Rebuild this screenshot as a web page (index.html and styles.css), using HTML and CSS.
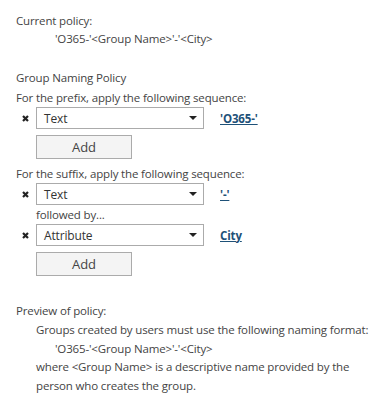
FILE: index.html
```html
<!DOCTYPE html>
<html lang="en">
<head>
    <meta charset="UTF-8">
    <title>Group Naming Policy</title>
    <link rel="stylesheet" href="styles.css">
</head>
<body>

<div class="page">
    <div class="section current">
        <div class="label">Current policy:</div>
        <div class="indent2">'O365-'&lt;Group Name&gt;'-'&lt;City&gt;</div>
    </div>

    <div class="section naming">
        <div class="label title">Group Naming Policy</div>
        <div class="label">For the prefix, apply the following sequence:</div>

        <div class="rule-row">
            <span class="remove"><svg width="7" height="7" viewBox="0 0 7 7"><path d="M1 1L6 6M6 1L1 6" stroke="#222" stroke-width="2.2"/></svg></span>
            <div class="select"><span>Text</span><span class="arrow"></span></div>
            <a class="value" href="#">'O365-'</a>
        </div>
        <button class="add-btn">Add</button>

        <div class="label suffix">For the suffix, apply the following sequence:</div>
        <div class="rule-row">
            <span class="remove"><svg width="7" height="7" viewBox="0 0 7 7"><path d="M1 1L6 6M6 1L1 6" stroke="#222" stroke-width="2.2"/></svg></span>
            <div class="select"><span>Text</span><span class="arrow"></span></div>
            <a class="value" href="#">'-'</a>
        </div>
        <div class="followed">followed by...</div>
        <div class="rule-row">
            <span class="remove"><svg width="7" height="7" viewBox="0 0 7 7"><path d="M1 1L6 6M6 1L1 6" stroke="#222" stroke-width="2.2"/></svg></span>
            <div class="select"><span>Attribute</span><span class="arrow"></span></div>
            <a class="value" href="#">City</a>
        </div>
        <button class="add-btn">Add</button>
    </div>

    <div class="section preview">
        <div class="label">Preview of policy:</div>
        <div class="indent1">Groups created by users must use the following naming format:</div>
        <div class="indent2">'O365-'&lt;Group Name&gt;'-'&lt;City&gt;</div>
        <div class="indent1">where &lt;Group Name&gt; is a descriptive name provided by the person who creates the group.</div>
    </div>
</div>

</body>
</html>
```

FILE: styles.css
```css
body {
    margin: 0;
    background-color: #fff;
    font-family: "Open Sans", "Noto Sans", Arial, sans-serif;
    font-size: 11.5px;
    letter-spacing: -0.15px;
    color: #444;
}
.page {
    padding: 12px 0 0 16px;
    width: 360px;
}
.label,
.indent1,
.indent2,
.followed {
    line-height: 18px;
}
.indent1 {
    padding-left: 20px;
}
.indent2 {
    padding-left: 39px;
}
.current {
    margin-bottom: 21px;
}
.naming .title {
    margin-bottom: 2px;
}
.rule-row {
    display: flex;
    align-items: center;
    height: 22px;
}
.remove {
    width: 20px;
    display: flex;
    padding-left: 6px;
    box-sizing: border-box;
}
.select {
    width: 168px;
    height: 22px;
    box-sizing: border-box;
    border: 1px solid #ababab;
    background-color: #fff;
    display: flex;
    align-items: center;
    justify-content: space-between;
    padding: 0 6px 0 7px;
    color: #333;
    font-size: 12px;
}
.arrow {
    width: 0;
    height: 0;
    border-left: 4px solid transparent;
    border-right: 4px solid transparent;
    border-top: 4px solid #222;
}
.value {
    margin-left: 16px;
    color: #1e5178;
    font-weight: bold;
    text-decoration: underline;
}
.add-btn {
    display: block;
    margin: 6px 0 0 20px;
    width: 96px;
    height: 24px;
    border: 1px solid #ababab;
    background-color: #f4f4f4;
    font-family: inherit;
    font-size: 13px;
    color: #444;
    padding: 0;
}
.suffix {
    margin-top: 6px;
}
.followed {
    padding-left: 20px;
    margin-top: 1px;
}
.preview {
    margin-top: 26px;
}
.preview .label {
    margin-bottom: 1px;
}
.preview .indent1,
.preview .indent2 {
    line-height: 18.5px;
}
```
